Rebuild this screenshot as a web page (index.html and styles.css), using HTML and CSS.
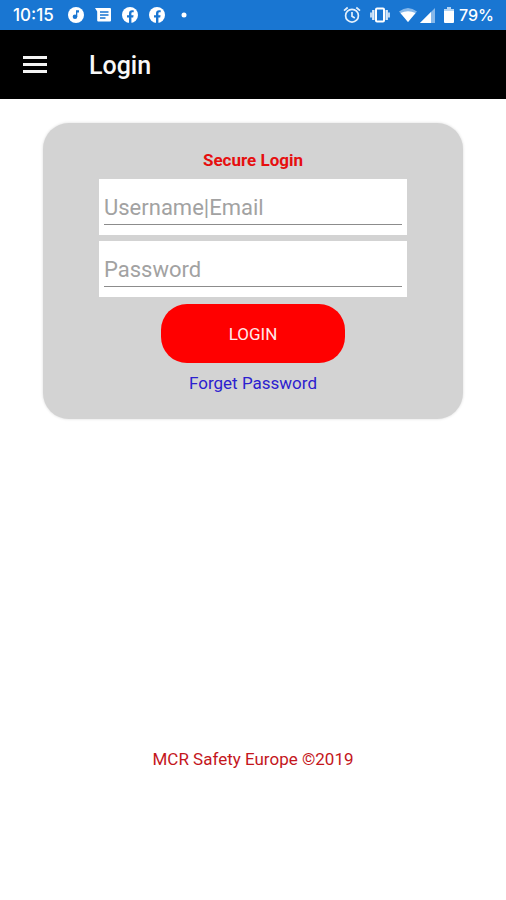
FILE: index.html
```html
<!DOCTYPE html>
<html lang="en">
<head>
<meta charset="utf-8">
<meta name="viewport" content="width=device-width, initial-scale=1">
<title>Login</title>
<link rel="stylesheet" href="styles.css">
</head>
<body>
<div class="status">
  <span class="clock">10:15</span>
  <div class="notices">
    <svg width="16" height="16" viewBox="0 0 16 16" aria-hidden="true"><circle cx="8" cy="8" r="8" fill="#fff"/><g fill="#1976d2"><circle cx="7" cy="9.7" r="2.3"/><path d="M8 3.2h3v2.2H9.3v4.3H8z"/></g></svg>
    <svg width="16" height="14" viewBox="0 0 16 14" aria-hidden="true"><path d="M0 0h15q1 0 1 1v11.500q0 1-1 1H3.200q-1 0-1-1V3.500z" fill="#fff"/><path d="M5 4h8.500M5 7h8.500M5 10h5.500" stroke="#1976d2" stroke-width="1.300"/></svg>
    <svg width="16" height="16" viewBox="0 0 16 16" aria-hidden="true"><circle cx="8" cy="8" r="8" fill="#fff"/><path d="M7 16v-5.500H5V8.200h2V6.500C7 4.300 8.200 3.200 10 3.200q.9 0 1.700.15v2h-1C9.700 5.350 9.400 5.900 9.400 6.600v1.600h2.200l-.4 2.300H9.400V16z" fill="#1976d2"/></svg>
    <svg width="16" height="16" viewBox="0 0 16 16" aria-hidden="true"><circle cx="8" cy="8" r="8" fill="#fff"/><path d="M7 16v-5.500H5V8.200h2V6.500C7 4.300 8.200 3.200 10 3.200q.9 0 1.700.15v2h-1C9.700 5.350 9.400 5.900 9.400 6.600v1.600h2.200l-.4 2.300H9.400V16z" fill="#1976d2"/></svg>
    <svg class="dot" width="6" height="6" viewBox="0 0 6 6" aria-hidden="true"><circle cx="3" cy="3" r="2.500" fill="#fff"/></svg>
  </div>
  <div class="system">
    <svg width="18" height="18" viewBox="0 0 18 18" fill="none" stroke="#e3f0fc" stroke-width="1.700" aria-hidden="true"><circle cx="9" cy="9.700" r="6.400"/><path d="M1 4.700 4.700 1.500M17 4.700l-3.700-3.200M9 6v4.200l2.800 1.700"/></svg>
    <svg width="20" height="16" viewBox="0 0 20 16" aria-hidden="true"><rect x="6" y="1.500" width="8" height="13" rx="1" fill="none" stroke="#fff" stroke-width="2"/><path d="M3.300 3v10M16.700 3v10" stroke="#d8e9fa" stroke-width="2.400"/><path d="M1 5.500v5M19 5.500v5" stroke="#b9d8f5" stroke-width="2.200"/></svg>
    <div class="radio">
      <svg width="18" height="14" viewBox="0 0 18 14" aria-hidden="true"><path d="M0 3.500Q9-3.500 18 3.500L9 14z" fill="#86b8ea"/><path d="M1.500 5Q9 1.500 16.500 5L9 14z" fill="#fff"/></svg>
      <svg width="15" height="15" viewBox="0 0 15 15" aria-hidden="true"><path d="M15 0v15H0z" fill="#86b8ea"/><path d="M11 4v11H0z" fill="#fff"/></svg>
    </div>
    <svg width="10" height="16" viewBox="0 0 10 16" aria-hidden="true"><path d="M3 0h4v2h3v3H0V2h3z" fill="#b5d5f4"/><path d="M0 4h10v11q0 1-1 1H1q-1 0-1-1z" fill="#fff"/></svg>
  </div>
  <span class="charge">79%</span>
</div>
<header class="bar">
  <button class="menu" type="button" aria-label="Menu"><svg width="24" height="18" viewBox="0 0 24 18" aria-hidden="true"><path d="M0 1.500h24M0 8.500h24M0 15.500h24" stroke="#f4f4f4" stroke-width="3"/></svg></button>
  <h1>Login</h1>
</header>
<main>
  <form class="card">
    <h2>Secure Login</h2>
    <div class="field"><input type="text" aria-label="Username or email" placeholder="Username|Email"></div>
    <div class="field"><input type="password" aria-label="Password" placeholder="Password"></div>
    <button class="submit" type="button">LOGIN</button>
    <a class="forgot" href="#">Forget Password</a>
  </form>
</main>
<footer>MCR Safety Europe ©2019</footer>
</body>
</html>
```
FILE: styles.css
```css
* { box-sizing: border-box; }

body {
  margin: 0;
  min-height: 100vh;
  display: flex;
  flex-direction: column;
  background: #fff;
  font-family: Roboto, "Liberation Sans", sans-serif;
}

svg { display: block; flex: none; }
h1, h2 { margin: 0; }

.status {
  display: flex;
  align-items: center;
  height: 30px;
  padding: 0 12px 0 13px;
  background: #1976d2;
  color: #fff;
  font: 500 17px/30px Inter, sans-serif;
}

.notices {
  display: flex;
  align-items: center;
  gap: 11px;
  margin-left: 14px;
}

.dot { margin-left: 5px; }

.system {
  display: flex;
  align-items: center;
  gap: 9px;
  margin-left: auto;
}

.radio { display: flex; align-items: center; gap: 3px; }
.charge { margin-left: 5px; font-size: 16px; }

.bar {
  display: flex;
  align-items: center;
  gap: 42px;
  height: 69px;
  padding: 0 23px;
  background: #000;
  color: #f8f8f8;
}

.bar h1 { padding-top: 2px; font-size: 25px; line-height: 32px; font-weight: 500; }

.menu {
  padding: 0;
  border: 0;
  background: none;
}

main { padding: 24px 43px 0; }

.card {
  display: flex;
  flex-direction: column;
  align-items: center;
  padding: 25px 56px 24px;
  border-radius: 26px;
  background: #d3d3d3;
  box-shadow: 0 0 3px rgba(0, 0, 0, 0.15);
}

.card h2 {
  margin-bottom: 7px;
  font-size: 17px;
  line-height: 24px;
  font-weight: 700;
  color: #e60f0f;
}

.field {
  width: 100%;
  height: 56px;
  margin-bottom: 6px;
  padding: 11px 5px 10px;
  background: #fff;
}

.field input {
  display: block;
  width: 100%;
  height: 35px;
  padding: 0;
  border: 0;
  border-bottom: 1px solid #8c8c8c;
  border-radius: 0;
  outline: 0;
  background: none;
  font: 22px/34px Roboto, "Liberation Sans", sans-serif;
  color: #333;
}

.field input::placeholder { color: #a2a2a2; opacity: 1; }

.submit {
  width: 60%;
  height: 59px;
  margin: 1px 0 8px;
  border: 0;
  border-radius: 26px;
  background: #f00;
  color: #ffe9e9;
  font: 17px/24px Roboto, "Liberation Sans", sans-serif;
}

.forgot {
  font-size: 17px;
  line-height: 24px;
  color: #2c20cf;
  text-decoration: none;
}

footer {
  margin-top: auto;
  padding-bottom: 129px;
  text-align: center;
  font-size: 17px;
  line-height: 24px;
  color: #c4161c;
}
```
